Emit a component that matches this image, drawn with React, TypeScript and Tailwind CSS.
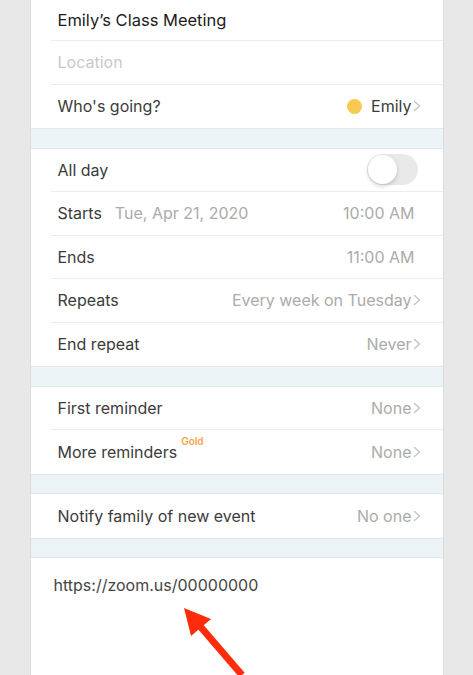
import React from 'react';

const font = { fontFamily: 'Inter, "Noto Sans", sans-serif' };

const Chevron = () => (
  <svg width="8" height="12" viewBox="0 0 8 12" className="ml-[1px] shrink-0">
    <polyline points="1.5,1.5 6.5,6 1.5,10.5" fill="none" stroke="#c4c4c4" strokeWidth="1.4" strokeLinecap="round" strokeLinejoin="round" />
  </svg>
);

const Band = () => <div className="h-[20.5px] bg-[#edf4f7] border-y border-[#e1e7ea]" />;

interface RowProps {
  label: React.ReactNode;
  value?: React.ReactNode;
  chevron?: boolean;
  last?: boolean;
}

const Row: React.FC<RowProps> = ({ label, value, chevron, last }) => (
  <div className="pl-5">
    <div className={`h-[43.5px] flex items-center pl-[7px] pr-[22px] ${last ? '' : 'border-b border-[#ececec]'}`}>
      <div className="flex-1 text-[16px] text-[#3b3b3b] flex items-center">{label}</div>
      {value !== undefined && (
        <div className="flex items-center text-[16px] text-[#ababab]">
          {value}
          {chevron && <Chevron />}
        </div>
      )}
    </div>
  </div>
);

export default function App() {
  return (
    <div className="w-[473px] h-[675px] overflow-hidden bg-[#e8e8e8] flex justify-center" style={font}>
      <div className="w-[414px] h-full bg-white border-x border-[#dcdcdc] flex flex-col">
        {/* title */}
        <div className="pl-5">
          <div className="h-[41px] flex items-center pl-[7px] border-b border-[#ececec] text-[16.5px] text-[#1c1c1c]">
            Emily’s Class Meeting
          </div>
        </div>
        <div className="pl-5">
          <div className="h-[43.5px] flex items-center pl-[7px] border-b border-[#ececec] text-[16px] text-[#c9c9c9]">
            Location
          </div>
        </div>
        <Row
          label="Who's going?"
          value={
            <span className="flex items-center gap-[9px] text-[#3b3b3b]">
              <span className="w-[15px] h-[15px] rounded-full bg-[#f9c850]" />
              Emily
            </span>
          }
          chevron
          last
        />
        <Band />
        <div className="pl-5">
          <div className="h-[43.5px] flex items-center pl-[7px] pr-[25px] border-b border-[#ececec]">
            <div className="flex-1 text-[16px] text-[#3b3b3b]">All day</div>
            <div className="w-[51px] h-[31px] rounded-full bg-[#e9e9ea] relative">
              <div className="absolute left-[1px] top-[1px] w-[29px] h-[29px] rounded-full bg-white shadow-[0_2px_4px_rgba(0,0,0,0.18)]" />
            </div>
          </div>
        </div>
        <div className="pl-5">
          <div className="h-[43.5px] flex items-center pl-[7px] pr-[28px] border-b border-[#ececec] text-[16px]">
            <span className="text-[#3b3b3b]">Starts</span>
            <span className="ml-[13px] flex-1 text-[#ababab]">Tue, Apr 21, 2020</span>
            <span className="text-[#ababab]">10:00 AM</span>
          </div>
        </div>
        <div className="pl-5">
          <div className="h-[43.5px] flex items-center pl-[7px] pr-[28px] border-b border-[#ececec] text-[16px]">
            <span className="flex-1 text-[#3b3b3b]">Ends</span>
            <span className="text-[#ababab]">11:00 AM</span>
          </div>
        </div>
        <Row label="Repeats" value="Every week on Tuesday" chevron />
        <Row label="End repeat" value="Never" chevron last />
        <Band />
        <Row label="First reminder" value="None" chevron />
        <Row
          label={
            <span className="relative">
              More reminders
              <span className="absolute left-[calc(100%+4px)] -top-[6px] text-[10px] font-semibold text-[#f7a24a]">Gold</span>
            </span>
          }
          value="None"
          chevron
          last
        />
        <Band />
        <Row label="Notify family of new event" value="No one" chevron last />
        <Band />
        <div className="flex-1 relative">
          <div className="pl-[23px] pt-[15px] text-[16px] text-[#444444]">https://zoom.us/00000000</div>
          {/* annotation arrow */}
          <svg className="absolute left-[140px] top-[43px]" width="80" height="80" viewBox="0 0 80 80">
            <line x1="28" y1="24" x2="71" y2="74" stroke="#fe2c0c" strokeWidth="7" />
            <polygon points="13,7 40,18 20,35" fill="#fe2c0c" />
          </svg>
        </div>
      </div>
    </div>
  );
}
